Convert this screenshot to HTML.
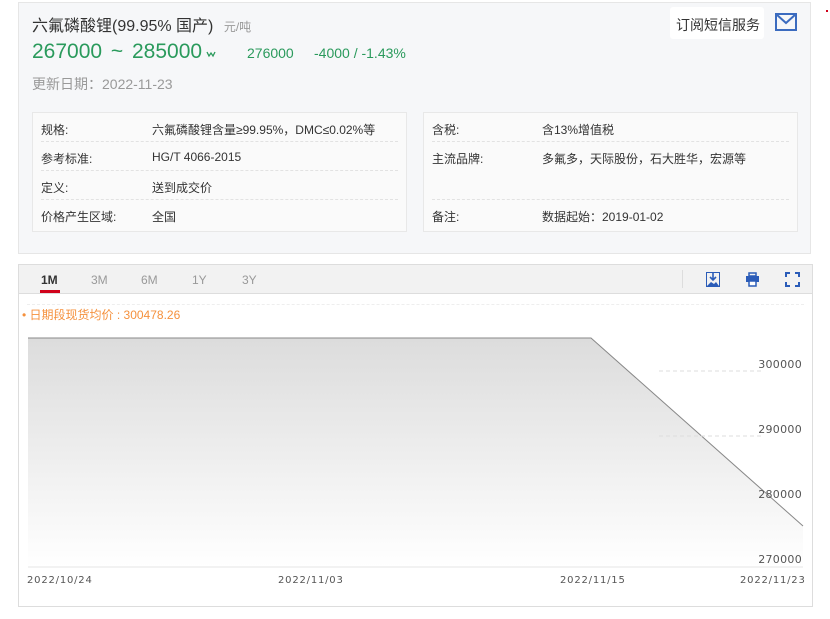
<!DOCTYPE html>
<html><head><meta charset="utf-8"><style>
*{margin:0;padding:0;box-sizing:border-box}
body{width:830px;height:619px;background:#fff;font-family:"Liberation Sans","Noto Sans CJK SC",sans-serif;position:relative;overflow:hidden;color:#333}
.a{position:absolute;white-space:nowrap}
.top{position:absolute;left:18px;top:2px;width:793px;height:252px;background:#f6f7f9;border:1px solid #e6e6e6}
.tb{position:absolute;top:112px;height:120px;background:#fafafa;border:1px solid #e8e8e8}
.row{position:absolute;left:8px;right:8px;height:29px;border-bottom:1px dashed #e2e2e2;font-size:12px;color:#333}
.row span{position:absolute;top:8px}
.chart{position:absolute;left:18px;top:264px;width:795px;height:343px;border:1px solid #ddd;background:#fff}
.hd{position:absolute;left:0;top:0;right:0;height:29px;background:#f2f2f2;border-bottom:1px solid #ddd}
.tab{position:absolute;top:8px;font-size:12px;color:#999}
.yl{position:absolute;font-size:11px;color:#555;font-family:"DejaVu Sans",sans-serif;letter-spacing:0.3px}
.xl{position:absolute;top:310px;font-size:10px;color:#555;font-family:"DejaVu Sans",sans-serif;letter-spacing:0.8px}
</style></head><body>
<div class="top">
 <div class="a" style="left:13px;top:9px;font-size:16px;color:#333">六氟磷酸锂(99.95% 国产) <span style="font-size:12px;color:#999;margin-left:6px">元/吨</span></div>
 <div class="a" style="left:13px;top:37px;font-size:21px;color:#2a9a5c;word-spacing:3px">267000 ~ 285000</div>
 <svg class="a" style="left:187px;top:47px" width="10" height="8" viewBox="0 0 10 8"><path d="M1 2l2 4 2-3 2 3 2-4" fill="none" stroke="#2a9a5c" stroke-width="1.3"/></svg>
 <div class="a" style="left:228px;top:42px;font-size:14px;color:#2a9a5c">276000</div>
 <div class="a" style="left:295px;top:42px;font-size:14px;color:#2a9a5c">-4000 / -1.43%</div>
 <div class="a" style="left:13px;top:71px;font-size:14px;color:#999">更新日期：2022-11-23</div>
 <div class="a" style="left:651px;top:4px;width:94px;height:32px;background:#fff;border-radius:3px;font-size:14px;color:#333;padding:8px 0 0 6px">订阅短信服务</div>
 <svg class="a" style="left:756px;top:10px" width="22" height="18" viewBox="0 0 22 18"><rect x="1" y="1" width="20" height="16" fill="none" stroke="#3b6bbf" stroke-width="2"/><path d="M1 1 L11 10 L21 1" fill="none" stroke="#3b6bbf" stroke-width="2"/></svg>
</div>
<div class="tb" style="left:32px;width:375px">
 <div class="row" style="top:0"><span style="left:0">规格:</span><span style="left:111px">六氟磷酸锂含量≥99.95%，DMC≤0.02%等</span></div>
 <div class="row" style="top:29px"><span style="left:0">参考标准:</span><span style="left:111px">HG/T 4066-2015</span></div>
 <div class="row" style="top:58px"><span style="left:0">定义:</span><span style="left:111px">送到成交价</span></div>
 <div class="row" style="top:87px;border:none"><span style="left:0">价格产生区域:</span><span style="left:111px">全国</span></div>
</div>
<div class="tb" style="left:423px;width:375px">
 <div class="row" style="top:0"><span style="left:0">含税:</span><span style="left:110px">含13%增值税</span></div>
 <div class="row" style="top:29px;height:58px"><span style="left:0">主流品牌:</span><span style="left:110px">多氟多，天际股份，石大胜华，宏源等</span></div>
 <div class="row" style="top:87px;border:none"><span style="left:0">备注:</span><span style="left:110px">数据起始：2019-01-02</span></div>
</div>
<div class="chart">
 <div class="hd">
  <div class="tab" style="left:22px;color:#333;font-weight:bold">1M</div>
  <div style="position:absolute;left:21px;top:25px;width:20px;height:3px;background:#d0021b"></div>
  <div class="tab" style="left:72px">3M</div>
  <div class="tab" style="left:122px">6M</div>
  <div class="tab" style="left:173px">1Y</div>
  <div class="tab" style="left:223px">3Y</div>
  <div style="position:absolute;left:663px;top:5px;width:1px;height:18px;background:#ddd"></div>
  <svg style="position:absolute;left:687px;top:7px" width="14" height="15" viewBox="0 0 14 15"><rect x="0.5" y="0.5" width="13" height="14" fill="none" stroke="#2b5cb8"/><path d="M7 1v7M4 5l3 3 3-3" stroke="#2b5cb8" fill="none" stroke-width="1.6"/><path d="M1 14l4-4 3 2 2-2 3 4z" fill="#2b5cb8"/></svg>
  <svg style="position:absolute;left:726px;top:7px" width="15" height="15" viewBox="0 0 15 15"><rect x="4" y="1" width="7" height="3" fill="none" stroke="#2b5cb8" stroke-width="1.5"/><rect x="1" y="4" width="13" height="6" fill="#2b5cb8"/><rect x="4" y="9" width="7" height="5" fill="#fff" stroke="#2b5cb8" stroke-width="1.5"/></svg>
  <svg style="position:absolute;left:766px;top:7px" width="15" height="15" viewBox="0 0 15 15" fill="none" stroke="#2b5cb8" stroke-width="2"><path d="M1 5V1h4M10 1h4v4M14 10v4h-4M5 14H1v-4"/></svg>
 </div>
 <div style="position:absolute;left:8px;right:8px;top:39px;border-top:1px dashed #eee"></div>
 <div class="a" style="left:3px;top:41px;font-size:12px;color:#f5913d">• 日期段现货均价 : 300478.26</div>
 <svg style="position:absolute;left:0;top:0" width="795" height="343">
  <defs><linearGradient id="g" x1="0" y1="0" x2="0" y2="1"><stop offset="0" stop-color="#dcdcdc"/><stop offset="1" stop-color="#fff"/></linearGradient></defs>
  <path d="M9 73H572L784 261V302H9Z" fill="url(#g)"/>
  <path d="M9 73H572L784 261" fill="none" stroke="#888" stroke-width="1"/>
  <path d="M640 106H742M640 171H742" stroke="#ddd" stroke-dasharray="4 3"/>
  <path d="M9 302H784" stroke="#e5e5e5"/>
 </svg>
 <div class="yl" style="right:10px;top:93px">300000</div>
 <div class="yl" style="right:10px;top:158px">290000</div>
 <div class="yl" style="right:10px;top:223px">280000</div>
 <div class="yl" style="right:10px;top:288px">270000</div>
 <div class="xl" style="left:8px">2022/10/24</div>
 <div class="xl" style="left:259px">2022/11/03</div>
 <div class="xl" style="left:541px">2022/11/15</div>
 <div class="xl" style="left:721px">2022/11/23</div>
</div>
<div style="position:absolute;left:826px;top:10px;width:2px;height:2px;background:#d0021b"></div>
</body></html>
